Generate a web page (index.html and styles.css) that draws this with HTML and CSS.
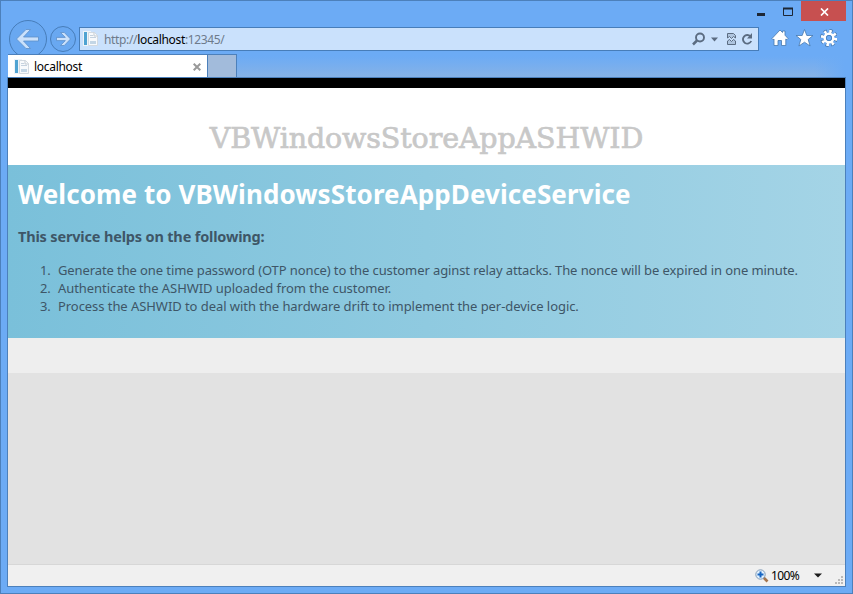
FILE: index.html
```html
<!DOCTYPE html>
<html lang="en">
<head>
<meta charset="utf-8">
<title>localhost</title>
<link rel="stylesheet" href="styles.css">
</head>
<body>
<svg width="0" height="0" class="defs">
  <symbol id="page" viewBox="0 0 16 16">
    <rect x="0" y="0" width="8" height="15" fill="#eef4f9"/>
    <rect x="1" y="1" width="3" height="13" fill="#4fa3d2"/>
    <path d="M5.500 1.500h6l3 3v10h-9z" fill="#f8fafc" stroke="#d3dae1"/>
    <path d="M11 1.500v3.500h3.500" fill="none" stroke="#c3cbd3"/>
    <path d="M7 4.500h3M7 6.500h6" stroke="#c5d2df"/>
    <rect x="7" y="10" width="6" height="3" fill="#c3d6e6"/>
  </symbol>
</svg>
<div class="window">
  <div class="titlebar">
    <svg class="minmax" width="50" height="19"><path d="M6 12h8v3H6z" fill="#1d2735"/><path d="M32.500 7.500h9v7h-9z" fill="none" stroke="#1d2735"/><path d="M32 7.500h10" stroke="#1d2735" stroke-width="2"/></svg>
    <div class="close"><svg width="9" height="8" viewBox="0 0 9 8"><path d="M1 .5l7 7M8 .5l-7 7" stroke="#fff" stroke-width="1.700"/></svg></div>
  </div>
  <div class="nav">
    <svg class="arrows" width="72" height="40" viewBox="0 0 72 40">
      <circle cx="21" cy="19" r="18.500" fill="#6199dc" fill-opacity=".15" stroke="#477db9"/>
      <path d="M9.500 19L19 9.500h4.500L16.500 17h15v4h-15l7 7.500H19z" fill="#cbe1fb" stroke="#5d8fc9" stroke-width=".8"/>
      <circle cx="56" cy="19" r="12.500" fill="#6199dc" fill-opacity=".15" stroke="#477db9"/>
      <path d="M63.500 19L57.300 12.500H53.500l4.800 4.900h-8.800v3.200h8.800l-4.800 4.900h3.800z" fill="#cbe1fb" stroke="#5d8fc9" stroke-width=".8"/>
    </svg>
    <div class="address">
      <svg class="pageicon" width="16" height="16"><use href="#page"/></svg>
      <span class="url">http://<b>localhost</b>:12345/</span>
      <svg class="addricons" width="64" height="16" viewBox="0 0 64 16">
        <g fill="none" stroke="#5b6c81" stroke-width="1.900">
          <circle cx="9" cy="6.500" r="4"/><path d="M6 9.500L2 13.500" stroke-width="2.500"/>
          <path d="M59.500 5.500A4.300 4.300 0 1 0 60.200 10"/>
        </g>
        <path d="M20 6.500h7l-3.500 4z M61 2v5.500h-5z" fill="#5b6c81"/>
        <path d="M36.500 7V2.500h6l2 2V7l-2-1.500-2 2-2-2zM36.500 10v3.500h8V10l-2-1.500-2 2-2-2z" fill="#afc5df" stroke="#5b6c81"/>
      </svg>
    </div>
    <svg class="tools" width="66" height="20" viewBox="0 0 66 20">
      <g fill="#fff" stroke="#4778ad" stroke-width=".8">
        <path d="M1 10.500L9 2l2.500 2.500V3h2.500v4.200l3 3.300-1 1.200-1.200-.7v6.500h-4.300v-5h-3.500v5h-4V11l-1 .8z"/>
        <path d="M33.500 1.500l2.300 6h6.200l-4.800 4 1.900 6.500-5.600-3.800-5.600 3.800 1.900-6.500-4.800-4h6.200z"/>
      </g>
      <circle cx="58" cy="10" r="6.800" fill="none" stroke="#4778ad" stroke-width="4.200" stroke-dasharray="3.200 2.140"/>
      <circle cx="58" cy="10" r="6.600" fill="none" stroke="#fff" stroke-width="3.200" stroke-dasharray="2.500 2.684"/>
      <circle cx="58" cy="10" r="4.300" fill="none" stroke="#fff" stroke-width="2.500"/>
      <circle cx="58" cy="10" r="2.700" fill="#6cabf5" stroke="#4778ad" stroke-width=".8"/>
    </svg>
  </div>
  <div class="tabs">
    <div class="tab">
      <svg class="pageicon" width="16" height="16"><use href="#page"/></svg>
      <span class="tabname">localhost</span>
      <svg class="tabclose" width="8" height="8" viewBox="0 0 8 8"><path d="M.7.7l6.600 6.600M7.300.7L.7 7.300" stroke="#999" stroke-width="2"/></svg>
    </div>
    <div class="newtab"></div>
    <div class="tabglow"></div>
  </div>
  <div class="viewport">
    <header class="banner"><span class="sitename">VBWindowsStoreAppASHWID</span></header>
    <section class="featured">
      <h1>Welcome to VBWindowsStoreAppDeviceService</h1>
      <h2>This service helps on the following:</h2>
      <ol>
        <li><i>1.</i><span>Generate the one time password (OTP nonce) to the customer aginst relay attacks. The nonce will be expired in one minute.</span></li>
        <li><i>2.</i><span class="looser">Authenticate the ASHWID uploaded from the customer.</span></li>
        <li><i>3.</i><span class="looser">Process the ASHWID to deal with the hardware drift to implement the per-device logic.</span></li>
      </ol>
    </section>
    <div class="body"></div>
    <div class="footer"></div>
    <div class="status">
      <svg width="14" height="14" viewBox="0 0 14 14"><path d="M8.500 8.500l4 4" stroke="#a5754d" stroke-width="2.600"/><circle cx="5.500" cy="5.500" r="4.700" fill="#e3f1fd" stroke="#809bb6"/><path d="M5.500 2.500v6M2.500 5.500h6" stroke="#1665c1" stroke-width="2"/></svg>
      <span class="zoom">100%</span>
      <svg class="caret" width="8" height="5"><path d="M0 .5h8L4 4.500z" fill="#1b1b1b"/></svg>
      <svg class="grip" width="8" height="8"><path d="M6 0h2v2H6zM3 3h2v2H3zM6 3h2v2H6zM0 6h2v2H0zM3 6h2v2H3zM6 6h2v2H6z" fill="#b9b9b9"/></svg>
    </div>
  </div>
</div>
</body>
</html>
```
FILE: styles.css
```css
* { box-sizing: border-box; }
body { margin: 0; font-family: "Noto Sans", "Open Sans", sans-serif; }
svg { display: block; flex: none; }
.defs { position: absolute; }
.window {
  width: 853px; height: 594px;
  padding: 0 6px 6px;
  border: 1px solid #4c80bb;
  background: #6cabf5;
  display: flex; flex-direction: column;
  overflow: hidden;
}
.titlebar { height: 19px; display: flex; justify-content: flex-end; }
.close { width: 45px; height: 20px; background: #c75050; display: flex; align-items: center; justify-content: center; padding: 1px 0 0 1px; }
.nav { height: 34px; display: flex; align-items: flex-start; }
.arrows { margin-bottom: -6px; }
.address {
  width: 680px; height: 24px; margin-top: 7px;
  border: 1px solid #477db9; background: #cae1fc;
  display: flex; align-items: center; padding-left: 3px;
}
.url { margin-left: 5px; padding-top: 2px; font-size: 12px; line-height: 20px; color: #6e7b8b; letter-spacing: -.34px; white-space: nowrap; }
.url b { font-weight: 400; color: #000; }
.addricons { margin-left: auto; margin-right: 3px; }
.tools { margin: 8px 0 0 12px; }
.tabs { height: 23px; display: flex; position: relative; z-index: 1; margin-left: 1px; }
.tab {
  width: 200px; background: #fff; border: 1px solid #4c80bb; border-width: 1px 1px 0 0;
  display: flex; align-items: center; padding: 1px 6px 0;
}
.tabname { margin-left: 4px; padding-top: 1px; font-size: 12px; line-height: 20px; letter-spacing: -.3px; }
.tabclose { margin-left: auto; }
.newtab { width: 29px; background: #a2bbdb; border: 1px solid #4c80bb; border-width: 1px 1px 0 0; }
.tabglow {
  flex: 1; margin-right: 1px;
  background: linear-gradient(to right, #6cabf500 95%, #6cabf5), linear-gradient(#6cabf500 10%, #86b2e6);
}
.viewport {
  flex: 1; border: 1px solid #4c80bb; background: #e2e2e2;
  display: flex; flex-direction: column; overflow: hidden;
}
.banner { height: 87px; flex: none; border-top: 10px solid #000; background: #fff; text-align: center; padding-top: 31px; }
.sitename { display: inline-block; font: 28.500px/40px "DejaVu Serif", serif; color: #c8c8c8; -webkit-text-stroke: .7px #c8c8c8; letter-spacing: -.12px; white-space: nowrap; }
.featured {
  height: 173px; flex: none; padding: 11px 10px 0; color: #3e5667;
  background: linear-gradient(to right, #7ac0da, #a4d4e6);
}
h1, h2, ol { margin: 0; padding: 0; white-space: nowrap; }
h1 { font-size: 26px; line-height: 36px; color: #fff; letter-spacing: .09px; }
h2 { font-size: 14.500px; line-height: 20px; margin-top: 14px; letter-spacing: -.17px; }
ol { list-style: none; margin-top: 15px; }
li { height: 18px; line-height: 18px; font-size: 13px; display: flex; }
li i { font-style: normal; width: 40px; padding-left: 22px; letter-spacing: -.2px; }
li span { letter-spacing: -.1px; }
li .looser { letter-spacing: -.06px; }
.body { height: 35px; flex: none; background: #eee; }
.footer { flex: 1; }
.status {
  height: 22px; background: #f0f0f0; border-top: 1px solid #d7d7d7;
  display: flex; align-items: center; justify-content: flex-end;
}
.zoom { width: 30px; margin-left: 2px; font-size: 12px; line-height: 20px; letter-spacing: -.6px; color: #000; }
.caret { margin-left: 13px; }
.grip { margin: 8px 2px 0 13px; }
```
